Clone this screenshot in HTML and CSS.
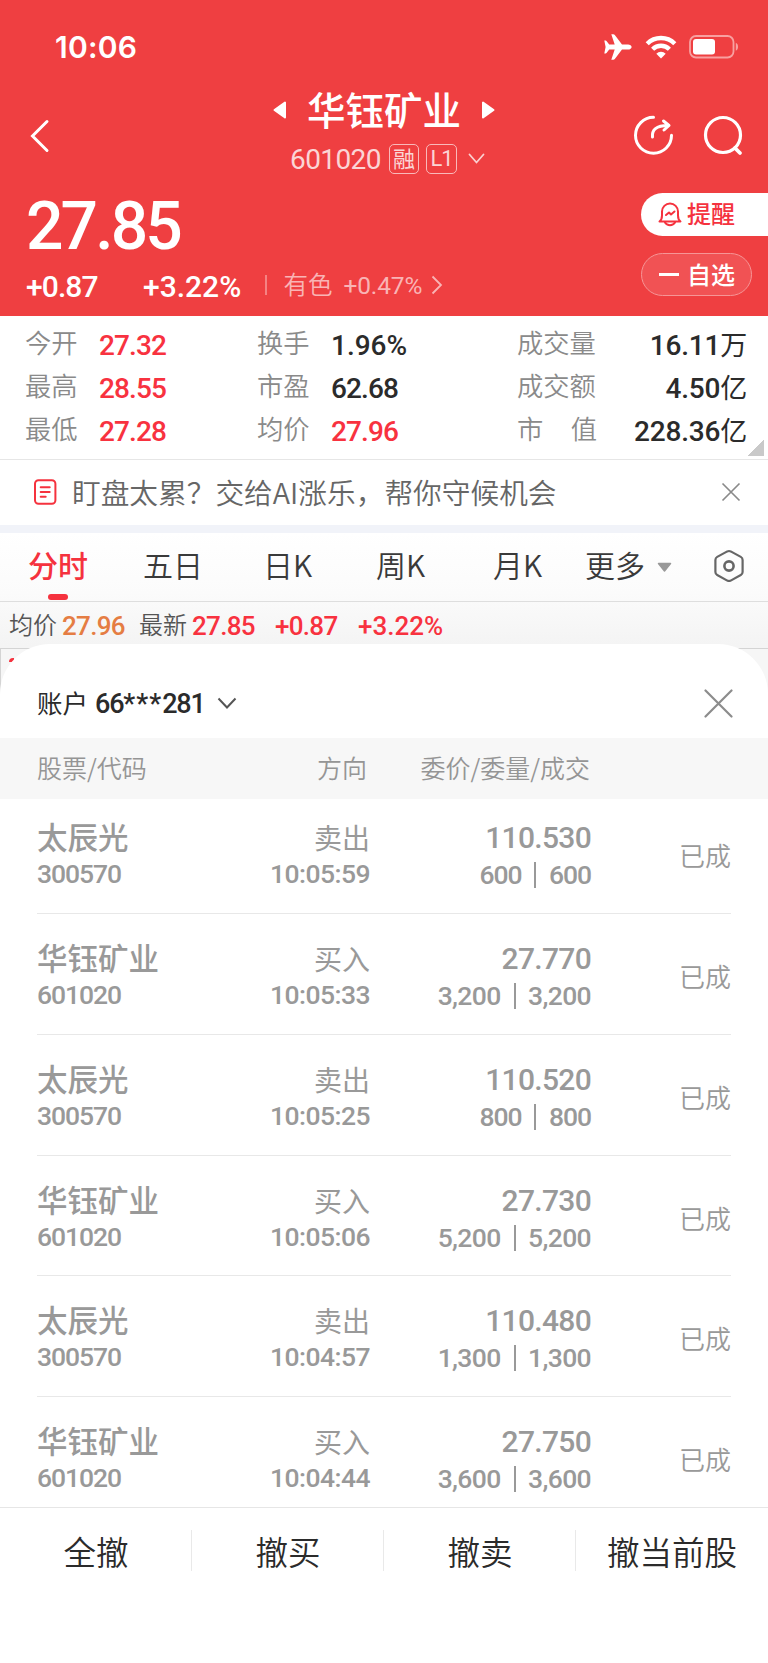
FILE: index.html
```html
<!DOCTYPE html>
<html lang="zh-CN">
<head>
<meta charset="utf-8">
<title>华钰矿业 601020</title>
<link rel="stylesheet" href="styles.css">
</head>
<body>
<div class="screen">
  <header class="hero">
    <div class="status">
      <span class="clock">10:06</span>
      <svg class="plane" width="28" height="26" viewBox="0 0 28 26"><path fill="#fff" d="M27.6 13c0-1.500-1.600-2.600-3.600-2.600h-6L10.800.9C10.400.4 9.900.2 9.300.2H7.300l3.400 10.300H5.200L2.700 7.300C2.400 6.900 2 6.600 1.500 6.600H.3L1.600 13 .3 19.400h1.200c.5 0 .9-.3 1.200-.7l2.500-3.200h5.500L7.300 25.800h2c.6 0 1.100-.2 1.500-.7l7.200-9.500h6c2 0 3.600-1.100 3.600-2.600z"/></svg>
      <svg class="wifi" width="32" height="24" viewBox="0 0 32 24"><g fill="none" stroke="#fff" stroke-width="4.400"><path d="M2.200 8.700a19.500 19.500 0 0 1 27.600 0"/><path d="M7.600 14.200a12 12 0 0 1 16.800 0"/></g><path fill="#fff" d="M16 23.500l-4.700-4.800a6.700 6.700 0 0 1 9.400 0z"/></svg>
      <svg class="battery" width="50" height="24" viewBox="0 0 50 24"><rect x="1" y="1" width="43.500" height="21.500" rx="6" fill="none" stroke="#f8a0a0" stroke-width="1.800"/><rect x="4" y="4" width="22" height="15.500" rx="3" fill="#fff"/><path fill="#f8a0a0" d="M46.800 7.800c3 1.300 3 6.700 0 8z"/></svg>
    </div>
    <div class="nav">
      <svg class="back" width="20" height="36" viewBox="0 0 20 36"><path d="M17 3.500L2.500 18 17 32.500" fill="none" stroke="#fff" stroke-width="3" stroke-linecap="round"/></svg>
      <div class="heading">
        <div class="title-row">
          <svg width="14" height="18" viewBox="0 0 14 18"><path d="M12 1.500v15L1.500 9z" fill="#fff" stroke="#fff" stroke-width="2" stroke-linejoin="round"/></svg>
          <h1>华钰矿业</h1>
          <svg width="14" height="18" viewBox="0 0 14 18"><path d="M2 1.500v15L12.500 9z" fill="#fff" stroke="#fff" stroke-width="2" stroke-linejoin="round"/></svg>
        </div>
        <div class="code-row">
          <span class="num code">601020</span>
          <span class="badge">融</span>
          <span class="badge wide">L1</span>
          <svg width="17" height="12" viewBox="0 0 17 12"><path d="M1.500 1.500l7 8 7-8" fill="none" stroke="#fbd0d0" stroke-width="1.800" stroke-linecap="round"/></svg>
        </div>
      </div>
      <svg class="share" width="40" height="40" viewBox="0 0 40 40"><g fill="none" stroke="#fff" stroke-width="3" stroke-linecap="round" stroke-linejoin="round"><path d="M20.500 2.300a18 18 0 1 0 18 18"/><path d="M19.500 22c-.7-7 3.500-11.500 15.500-11.500M30.500 6l5.500 4.500-5 4.500"/></g></svg>
      <svg class="search" width="40" height="42" viewBox="0 0 40 42"><g fill="none" stroke="#fff" stroke-width="3.200" stroke-linecap="round"><circle cx="20" cy="20" r="17.500"/><path d="M32 33l5 5" stroke-width="3.800"/></g></svg>
    </div>
    <div class="quote">
      <div class="quote-main">
        <div class="num price">27.85</div>
        <div class="changes">
          <span class="num chg">+0.87</span>
          <span class="num pct">+3.22%</span>
          <i class="bar"></i>
          <span class="sector">有色</span>
          <span class="num sector-pct">+0.47%</span>
          <svg width="12" height="20" viewBox="0 0 12 20"><path d="M1.500 1.500l8.500 8.500-8.500 8.500" fill="none" stroke="#f9b4b5" stroke-width="1.800"/></svg>
        </div>
      </div>
      <div class="pills">
        <div class="pill alert">
          <svg width="24" height="25" viewBox="0 0 24 25"><g fill="none" stroke="#f5323e" stroke-width="2" stroke-linejoin="round" stroke-linecap="round"><path d="M1.500 19.500c2-1.500 2.500-3 2.500-6V9.500a8 8 0 0 1 16 0v4c0 3 .5 4.500 2.500 6z"/><path d="M7 20.500c2 3.500 8 3.500 10 0"/><path d="M8 13l3-2.500 2 2 3.500-3"/></g></svg>
          <span>提醒</span>
        </div>
        <div class="pill watch"><i class="minus"></i><span>自选</span></div>
      </div>
    </div>
  </header>

  <section class="stats">
    <span class="label">今开</span><span class="num val up">27.32</span>
    <span class="label">换手</span><span class="num val pc">1.96%</span>
    <span class="label">成交量</span><span class="num val end">16.11<b>万</b></span>
    <span class="label">最高</span><span class="num val up">28.55</span>
    <span class="label">市盈</span><span class="num val">62.68</span>
    <span class="label">成交额</span><span class="num val end">4.50<b>亿</b></span>
    <span class="label">最低</span><span class="num val up">27.28</span>
    <span class="label">均价</span><span class="num val up">27.96</span>
    <span class="label spread"><span>市</span><span>值</span></span><span class="num val end">228.36<b>亿</b></span>
    <i class="corner"></i>
  </section>

  <section class="notice">
    <svg width="24" height="27" viewBox="0 0 24 27"><g fill="none" stroke="#f5323e" stroke-width="2" stroke-linecap="round"><rect x="2" y="1.300" width="20.400" height="23.400" rx="3.500"/><path d="M7.700 8.200h9M7.700 13h9M7.700 17.800h5"/></g></svg>
    <p>盯盘太累？交给AI涨乐，帮你守候机会</p>
    <svg class="dismiss" width="20" height="20" viewBox="0 0 20 20"><path d="M1.500 1.500l17 17M18.500 1.500l-17 17" stroke="#8a8a8a" stroke-width="1.700"/></svg>
  </section>

  <section class="chart">
    <nav class="tabs">
      <span class="tab active">分时</span>
      <span class="tab">五日</span>
      <span class="tab">日K</span>
      <span class="tab">周K</span>
      <span class="tab">月K</span>
      <span class="tab">更多</span>
      <svg class="caret" width="15" height="11" viewBox="0 0 15 11"><path d="M1.500 1.500h12l-6 7.500z" fill="#999" stroke="#999" stroke-width="1.500" stroke-linejoin="round"/></svg>
      <svg class="gear" width="32" height="34" viewBox="0 0 32 34"><g fill="none" stroke="#666" stroke-width="2.200" stroke-linejoin="round"><path d="M14.300 2.400q1.700-.8 3.400 0l10.100 5.500q1.800 1 1.800 3V23q0 2-1.800 3l-10.100 5.600q-1.700.8-3.400 0L4.200 26q-1.800-1-1.800-3V10.900q0-2 1.800-3z"/><circle cx="16" cy="17" r="4.600" stroke-width="2.600"/></g></svg>
    </nav>
    <div class="ticker">
      <span class="tlabel">均价</span><span class="num avg">27.96</span>
      <span class="tlabel">最新</span><span class="num up">27.85</span>
      <span class="num up">+0.87</span>
      <span class="num up pc">+3.22%</span>
    </div>
    <div class="plot"><i class="speck"></i></div>
  </section>

  <section class="sheet">
    <div class="account">
      <span class="acc-label">账户</span><span class="num acc-no">66<span class="mask">***</span>281</span>
      <svg width="20" height="13" viewBox="0 0 20 13"><path d="M1.500 1.500l8.500 9 8.500-9" fill="none" stroke="#555" stroke-width="2"/></svg>
      <svg class="close" width="29" height="29" viewBox="0 0 29 29"><path d="M1.500 1.500l26 26M27.500 1.500l-26 26" stroke="#8c8c8c" stroke-width="2.200" stroke-linecap="round"/></svg>
    </div>
    <div class="thead"><span>股票/代码</span><span>方向</span><span>委价/委量/成交</span><span></span></div>
    <div class="rows">
      <div class="row"><div><p class="name">太辰光</p><p class="num sub">300570</p></div><div><p class="side">卖出</p><p class="num sub time">10:05:59</p></div><div><p class="num cost">110.530</p><p class="num sub">600<i></i>600</p></div><div class="state">已成</div></div>
      <div class="row"><div><p class="name">华钰矿业</p><p class="num sub">601020</p></div><div><p class="side">买入</p><p class="num sub time">10:05:33</p></div><div><p class="num cost">27.770</p><p class="num sub qty">3,200<i></i>3,200</p></div><div class="state">已成</div></div>
      <div class="row"><div><p class="name">太辰光</p><p class="num sub">300570</p></div><div><p class="side">卖出</p><p class="num sub time">10:05:25</p></div><div><p class="num cost">110.520</p><p class="num sub">800<i></i>800</p></div><div class="state">已成</div></div>
      <div class="row"><div><p class="name">华钰矿业</p><p class="num sub">601020</p></div><div><p class="side">买入</p><p class="num sub time">10:05:06</p></div><div><p class="num cost">27.730</p><p class="num sub qty">5,200<i></i>5,200</p></div><div class="state">已成</div></div>
      <div class="row"><div><p class="name">太辰光</p><p class="num sub">300570</p></div><div><p class="side">卖出</p><p class="num sub time">10:04:57</p></div><div><p class="num cost">110.480</p><p class="num sub qty">1,300<i></i>1,300</p></div><div class="state">已成</div></div>
      <div class="row"><div><p class="name">华钰矿业</p><p class="num sub">601020</p></div><div><p class="side">买入</p><p class="num sub time">10:04:44</p></div><div><p class="num cost">27.750</p><p class="num sub qty">3,600<i></i>3,600</p></div><div class="state">已成</div></div>
    </div>
    <footer class="actions"><span>全撤</span><span>撤买</span><span>撤卖</span><span>撤当前股</span></footer>
  </section>
</div>
</body>
</html>
```
FILE: styles.css
```css
* { box-sizing: border-box; }
body { margin: 0; background: #fff; }
h1, p { margin: 0; font-weight: inherit; }
svg { display: block; flex: none; }
.screen {
  width: 768px; height: 1663px; overflow: hidden;
  display: flex; flex-direction: column;
  font-family: "Noto Sans CJK SC", sans-serif; font-weight: 350; color: #2b2b2b;
}
.num { font-family: Roboto, "Noto Sans CJK SC", sans-serif; font-weight: 500; white-space: nowrap; }
.up { color: #f8323f; }

/* red header */
.hero { height: 315.5px; flex: none; background: #ef3f41; color: #fff; display: flex; flex-direction: column; }
.status { height: 88px; padding: 6px 29px 0 55px; display: flex; align-items: center; }
.clock { font: 600 30px/36px Inter, sans-serif; letter-spacing: 0.2px; margin-right: auto; }
.wifi { margin: 0 12px 0 13px; }
.nav { height: 100px; display: grid; grid-template-columns: 243px 1fr 40px 72px 23px; align-items: start; padding-left: 30px; }
.back { margin-top: 30px; }
.share { margin-top: 27px; }
.search { margin: 27px 0 0 30px; }
.title-row { height: 44px; display: flex; align-items: center; }
.title-row h1 { font-size: 38.500px; line-height: 44px; font-weight: 500; margin: -4px 20px 0; white-space: nowrap; }
.code-row { height: 48px; padding: 5px 0 0 17px; display: flex; align-items: center; color: #fbd5d5; }
.code { font-size: 28px; line-height: 30px; font-weight: 400; letter-spacing: -0.6px; width: 99px; padding-top: 2px; }
.badge { width: 30px; height: 30px; border: 1.500px solid #f9b9ba; border-radius: 5px; font-size: 22px; line-height: 24px; text-align: center; font-weight: 400; margin-right: 7px; }
.badge.wide { width: 31px; margin-right: 11px; font-family: Roboto, sans-serif; line-height: 27px; letter-spacing: -1px; }
.quote { flex: 1; display: flex; justify-content: space-between; }
.quote-main { padding-left: 26px; }
.price { font-size: 66px; line-height: 74px; letter-spacing: -2.900px; height: 75px; padding-top: 2px; }
.changes { display: flex; align-items: center; height: 46px; }
.chg, .pct { font-size: 30px; }
.chg { width: 117px; letter-spacing: -0.900px; }
.pct { width: 122px; letter-spacing: 0; }
.bar { width: 1.500px; height: 20px; background: #f58283; margin: -3px 17px 0 0; }
.sector { font-size: 24.500px; line-height: 30px; color: #f9b4b5; width: 60px; margin-top: -4px; }
.sector-pct { font-size: 24.500px; font-weight: 400; color: #f9b4b5; letter-spacing: -0.150px; width: 87px; margin-top: -2px; }
.changes svg { margin-top: -3px; }
.pills { width: 127px; padding-top: 4.500px; }
.pill { height: 43px; border-radius: 22px; display: flex; align-items: center; font-size: 24px; font-weight: 500; line-height: 30px; }
.pill span { margin-top: -2px; }
.alert { background: #fff; color: #f5323e; border-radius: 22px 0 0 22px; padding-left: 17px; gap: 5px; }
.watch { margin-top: 17.500px; width: 111px; background: #f15254; border: 1.500px solid #f69596; padding-left: 17px; }
.minus { width: 20px; height: 2.500px; background: #fff; margin-right: 8px; }

/* quote statistics */
.stats {
  position: relative; flex: none; height: 144px; padding: 7.500px 21px 0 26px; border-bottom: 1.500px solid #e6e6e6;
  display: grid; grid-template-columns: 73px 159px 73px 187px 79px 1fr; grid-auto-rows: 43.200px; align-items: center;
}
.label { font-size: 26.300px; line-height: 40px; color: #8a8a8a; white-space: nowrap; margin-left: -1px; padding-bottom: 5px; }
.spread { display: flex; justify-content: space-between; }
.val { font-size: 28px; line-height: 40px; letter-spacing: -0.900px; padding-top: 2px; }
.val.pc { letter-spacing: 0; }
.end { text-align: right; letter-spacing: -0.200px; }
.val b { font-weight: 400; font-size: 27px; }
.corner { position: absolute; right: 4px; bottom: 3px; width: 16px; height: 16px; background: linear-gradient(135deg, transparent 50%, #c9c9c9 50%); }

/* promotion strip */
.notice { flex: none; height: 73px; border-bottom: 8px solid #f1f3f9; padding: 0 27px 0 33px; display: flex; align-items: center; }
.notice p { font-size: 28.700px; line-height: 40px; color: #666; margin: -1px 0 0 15px; white-space: nowrap; }
.dismiss { margin-left: auto; }

/* chart tabs */
.chart { flex: none; height: 206px; margin-bottom: -94.500px; background: linear-gradient(#fff, #fbfbfb 60px, #f4f4f4 112px); }
.tabs { height: 69.500px; border-bottom: 1.500px solid #dedede; display: grid; grid-template-columns: 115px 120px 113px 117px 92px 72px 56px 40px; align-items: center; padding-left: 28px; }
.tab { font-size: 30px; line-height: 62px; height: 68px; color: #3a3a3a; white-space: nowrap; }
.active { position: relative; font-weight: 500; color: #f5323e; }
.active::after { content: ""; position: absolute; left: 20px; bottom: 1px; width: 20px; height: 6px; border-radius: 3px; background: #f5323e; }
.caret { margin-top: 2px; }
.gear { margin-top: -1px; }
.ticker { height: 45.500px; display: flex; align-items: center; padding: 2px 0 0 9px; font-size: 26px; line-height: 40px; }
.ticker .num { letter-spacing: -0.700px; }
.ticker .pc { letter-spacing: 0; }
.tlabel { font-size: 24px; color: #555; margin: -3px 5px 0 0; }
.ticker .avg { color: #e57d43; width: 77px; }
.ticker .up { width: 83px; }
.plot { height: 90px; border-top: 1.500px solid #d4d4d4; border-left: 1.500px solid #d4d4d4; background: #f6f6f6; padding: 9px 0 0 8px; }
.speck { display: block; width: 5px; height: 4px; background: #f5323e; border-radius: 4px 0 0 0; }

/* order sheet */
.sheet { position: relative; flex: 1; background: #fff; border-radius: 50px 50px 0 0; display: flex; flex-direction: column; }
.account { height: 94px; padding: 24px 35px 0 37px; display: flex; align-items: center; }
.acc-label { font-size: 25.500px; line-height: 36px; font-weight: 400; width: 58px; margin-top: -2px; }
.acc-no { font-size: 27px; letter-spacing: -1.200px; width: 122px; padding-top: 2px; }
.mask { letter-spacing: 1px; }
.close { margin-left: auto; }
.thead, .row { display: grid; grid-template-columns: 150px 183px 221px 1fr; }
.thead { height: 61px; background: #f7f7f7; padding: 0 37px; font-size: 25px; line-height: 58px; color: #959595; }
.thead span + span { text-align: right; padding-right: 1px; }
.thead span:nth-child(2) { padding-right: 3px; }
.row div + div { text-align: right; }
.rows { height: 708px; overflow: hidden; padding: 0 37px; color: #999; }
.row { height: 120.800px; align-items: start; padding-top: 25px; border-bottom: 1.300px solid #e8e8e8; }
.row:first-child { height: 115px; padding-top: 18.500px; }
.name { font-size: 30.500px; font-weight: 500; line-height: 38px; margin-top: -1px; }
.side { font-size: 28px; font-weight: 400; line-height: 38px; }
.cost { font-size: 30px; line-height: 38px; letter-spacing: -0.700px; padding-top: 1px; }
.sub { font-size: 26.500px; line-height: 36px; letter-spacing: -1.050px; }
.name + .sub { padding-top: 1px; }
.time { letter-spacing: -0.550px; }
.qty { letter-spacing: -0.650px; }
.sub i { display: inline-block; width: 2px; height: 26px; background: #999; margin: 0 12.500px 0 13px; vertical-align: -4px; }
.state { font-size: 26px; line-height: 40px; padding-top: 17px; }
.actions { flex: 1; border-top: 1.500px solid #e6e6e6; display: grid; grid-template-columns: repeat(4, 1fr); align-items: start; padding-top: 22px; }
.actions span { font-size: 32.500px; line-height: 41px; text-align: center; font-weight: 350; }
.actions span + span { border-left: 1px solid #e9e9e9; margin-left: -1px; }
```
